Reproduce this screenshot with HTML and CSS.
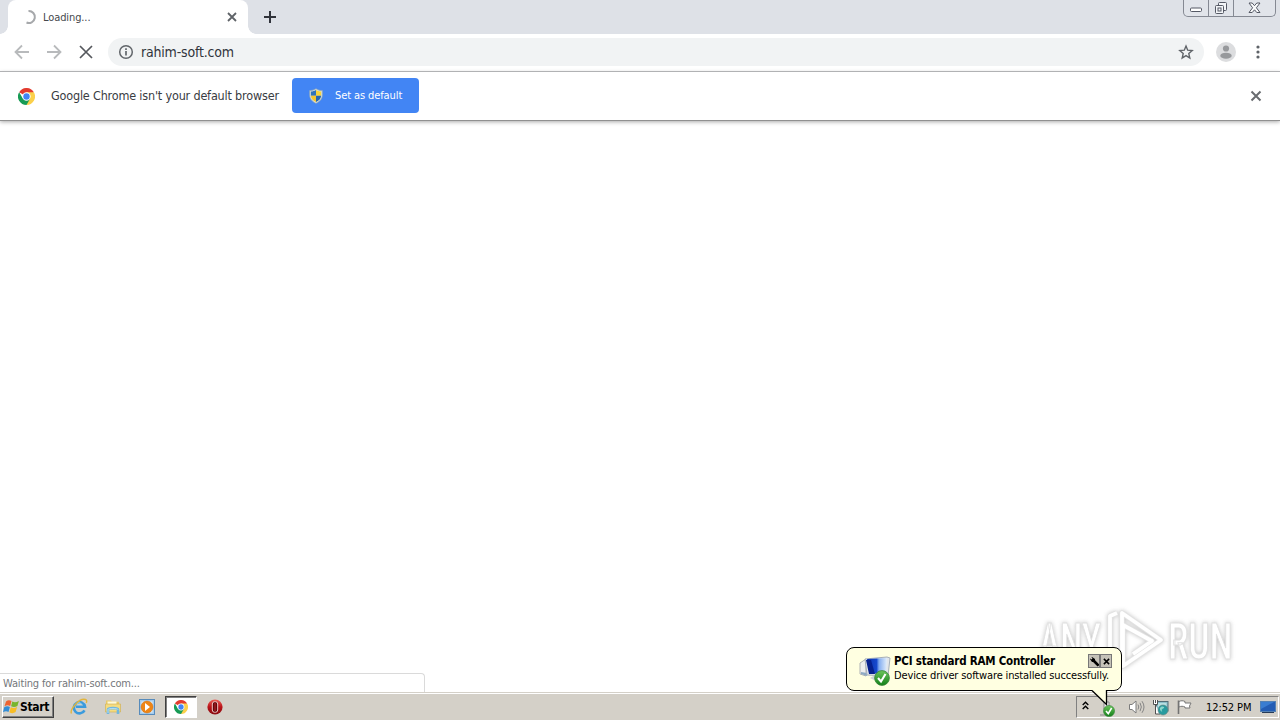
FILE: index.html
```html
<!DOCTYPE html>
<html lang="en">
<head>
<meta charset="utf-8">
<title>Loading...</title>
<link rel="stylesheet" href="styles.css">
</head>
<body>
<svg class="defs" width="0" height="0" aria-hidden="true">
  <defs>
    <linearGradient id="orb" x2="0" y2="1"><stop stop-color="#ee6058"/><stop offset=".5" stop-color="#b91319"/><stop offset="1" stop-color="#870a10"/></linearGradient>
    <linearGradient id="screen" x2="1" y2="0"><stop stop-color="#0b2fae"/><stop offset=".48" stop-color="#1649cd"/><stop offset=".6" stop-color="#83acf0"/><stop offset="1" stop-color="#e2eefb"/></linearGradient>
    <linearGradient id="green" x2="0" y2="1"><stop stop-color="#6cc55c"/><stop offset="1" stop-color="#138018"/></linearGradient>
    <symbol id="chrome" viewBox="0 0 18 18">
      <path fill="#e33b2e" d="M9 9 1.2 4.5a9 9 0 0 1 15.6 0Z"/>
      <path fill="#fbd04b" d="M9 9V4.5h7.8A9 9 0 0 1 9 18Z"/>
      <path fill="#179b55" d="M1.2 4.5 5.1 11.2 12.9 11.2 9 18A9 9 0 0 1 1.2 4.5Z"/>
      <circle cx="9" cy="9" r="4.4" fill="#fff"/><circle cx="9" cy="9" r="3.4" fill="#4285f4"/>
    </symbol>
    <symbol id="check" viewBox="0 0 16 16">
      <circle cx="8" cy="8" r="7.4" fill="url(#green)" stroke="#36853a" stroke-width=".8"/>
      <path d="m4 8 3 3.5L11.5 4" fill="none" stroke="#fff" stroke-width="2.1"/>
    </symbol>
  </defs>
</svg>
<div class="desktop">
  <header class="tabstrip">
    <div class="tab">
      <svg class="spinner" width="16" height="16" viewBox="0 0 16 16"><path d="M7.500 2A6 6 0 1 1 5.500 13.500" fill="none" stroke="#a6a8ab" stroke-width="2"/></svg>
      <span class="tab-title">Loading...</span>
      <svg width="10" height="10" viewBox="0 0 10 10"><path d="m1 1 8 8M9 1 1 9" stroke="#5f6368" stroke-width="1.8"/></svg>
    </div>
    <svg class="newtab" width="12" height="12" viewBox="0 0 12 12"><path d="M6 0v12M0 6h12" stroke="#30333b" stroke-width="2"/></svg>
    <div class="window-controls">
      <span class="wc wc-min"><svg width="14" height="6" viewBox="0 0 14 6"><rect x="1.5" y="1" width="11" height="3.5" rx="1" fill="#fff" stroke="#555965"/></svg></span>
      <span class="wc wc-max"><svg width="14" height="14" viewBox="0 0 14 14" fill="#f3f5f8" stroke="#555965"><rect x="4.5" y="1.5" width="8" height="8" rx="1"/><rect x="1.5" y="4.5" width="8" height="8" rx="1"/><rect x="4" y="7" width="3" height="3"/></svg></span>
      <span class="wc wc-close"><svg width="13" height="12" viewBox="0 0 13 12"><path d="M1 1h3.2l2.3 2.7L8.800 1H12L8.400 5.800 12 10.500H8.800L6.500 7.800l-2.300 2.700H1l3.600-4.700Z" fill="#fafbfc" stroke="#555965"/></svg></span>
    </div>
  </header>
  <div class="toolbar">
    <div class="nav">
      <svg width="16" height="16" viewBox="0 0 16 16" fill="none" stroke="#b8babc" stroke-width="1.8"><path d="M15 8H2M8 1.500 1.500 8 8 14.500"/></svg>
      <svg width="16" height="16" viewBox="0 0 16 16" fill="none" stroke="#b8babc" stroke-width="1.800"><path d="M1 8h13M8 1.500 14.500 8 8 14.500"/></svg>
      <svg width="16" height="16" viewBox="0 0 16 16" stroke="#55585d" stroke-width="1.700"><path d="m2 2 12 12M14 2 2 14"/></svg>
    </div>
    <div class="omnibox">
      <svg width="16" height="16" viewBox="0 0 16 16"><circle cx="8" cy="8" r="6.300" fill="none" stroke="#62666b" stroke-width="1.500"/><path d="M8 7v4.500M8 4.300v1.600" stroke="#62666b" stroke-width="1.700"/></svg>
      <span class="url">rahim-soft.com</span>
      <svg width="16" height="16" viewBox="0 0 16 16"><path d="m8 2 1.700 4.200 4.500.4-3.400 3 1 4.400L8 11.600 4.200 14l1-4.400-3.400-3 4.500-.4Z" fill="none" stroke="#5f6368" stroke-width="1.400"/></svg>
    </div>
    <svg class="avatar" width="20" height="20" viewBox="0 0 20 20"><circle cx="10" cy="10" r="10" fill="#dcdddf"/><circle cx="10" cy="6.500" r="3.100" fill="#97999c"/><ellipse cx="10" cy="13.700" rx="5.700" ry="3" fill="#97999c"/></svg>
    <svg class="kebab" width="4" height="16" viewBox="0 0 4 16" fill="#5f6368"><circle cx="2" cy="3" r="1.600"/><circle cx="2" cy="8" r="1.600"/><circle cx="2" cy="13" r="1.600"/></svg>
  </div>
  <div class="infobar">
    <svg class="info-logo" width="17" height="17"><use href="#chrome"/></svg>
    <span class="info-text">Google Chrome isn't your default browser</span>
    <div class="set-default">
      <svg width="14" height="16" viewBox="0 0 14 16"><path d="M7 .7c2 1.300 4 1.800 6.300 1.800v4.700c0 3.700-2.500 6.300-6.300 8.100C3.200 13.500.7 10.900.7 7.200V2.500C3 2.500 5 2 7 .7Z" fill="#d9dfd8" stroke="#8fa7b8" stroke-width=".7"/><path d="M7 2v5.700H1.900V3.600C3.900 3.400 5.300 3 7 2Z" fill="#2f73bb"/><path d="M7 2c1.700 1 3.100 1.400 5.100 1.600v4.100H7Z" fill="#f7d43b"/><path d="M1.900 7.700H7V14c-3-1.500-4.900-3.400-5.100-6.300Z" fill="#f4c62e"/><path d="M7 7.700h5.100C11.900 10.600 10 12.500 7 14Z" fill="#2866ad"/></svg>
      <span class="set-text">Set as default</span>
    </div>
    <svg class="info-close" width="12" height="12" viewBox="0 0 12 12"><path d="m1.500 1.500 9 9M10.500 1.500l-9 9" stroke="#696c70" stroke-width="2"/></svg>
  </div>
  <main class="page">
    <div class="status"><span>Waiting for rahim-soft.com...</span></div>
  </main>
  <footer class="taskbar">
    <div class="start">
      <svg width="17" height="16" viewBox="0 0 17 16"><path d="M3 2.500C5 .8 6.700 1 8.500 2L7.200 7C5.300 6 3.700 6 1.500 7.300Z" fill="#ed6432"/><path d="M9.300 2.500c2 1.100 4 1 6.600-.5L14.400 7c-2 1.300-4.200 1.500-6.300.3Z" fill="#78b52f"/><path d="M1.200 8.300C3.300 7 5 7.100 6.900 8L5.500 13C3.700 12 2.100 12 0 13.300Z" fill="#328dd6"/><path d="M7.800 8.300c2 1.200 4 1 6.300-.2l-1.500 5c-2 1.300-4.100 1.400-6.200.2Z" fill="#f8bd25"/></svg>
      <span>Start</span>
    </div>
    <div class="quick">
      <svg width="18" height="18" viewBox="0 0 18 18"><path d="M14.500 12.300A5.600 5.600 0 1 1 15 8.800H6" fill="none" stroke="#3b9bdd" stroke-width="2.600"/><path d="M6 6.500a3.500 3.500 0 0 1 6 0" fill="none" stroke="#a9def8" stroke-width="1"/><path d="M1.500 15.500C-.5 12 9-.3 15.500 1.500c1.500.5 1.400 2 .7 3.400" fill="none" stroke="#e2b53c" stroke-width="1.400"/></svg>
      <svg width="18" height="18" viewBox="0 0 18 18"><path d="M2 4V2.500h5l1 1.300h7V9H2Z" fill="#e8ca69"/><path d="M3.500 3.500h9V6h-9Z" fill="#fff9d8"/><path d="M1.500 6h15v8h-15Z" fill="#f5dc80" stroke="#cfac4e" stroke-width=".6"/><path d="M4 16v-4.500c0-2 10-2 10 0V16" fill="none" stroke="#71b7df" stroke-width="2.600"/><path d="M4 15v-3.500c0-1.400 10-1.400 10 0" fill="none" stroke="#c7e8f7" stroke-width=".8"/></svg>
      <svg width="18" height="18" viewBox="0 0 18 18"><rect x="1.500" y="1.500" width="15" height="15" fill="#a4ccee" stroke="#578bbb"/><path d="M3.500 3.500h11v11h-11Z" fill="#e5f0f7"/><circle cx="9" cy="9" r="6" fill="#ee8515" stroke="#cf6a0d" stroke-width=".5"/><path d="m7 5 5 4-5 4Z" fill="#fff"/></svg>
    </div>
    <div class="task-active"><svg width="14" height="14"><use href="#chrome"/></svg></div>
    <svg class="opera" width="16" height="16" viewBox="0 0 16 16"><circle cx="8" cy="8" r="7.600" fill="url(#orb)"/><rect x="5.300" y="2.700" width="5.400" height="10.600" rx="2.300" fill="#61070c" stroke="#f0c6c4" stroke-width="1"/><path d="M8 4v8" stroke="#a11a1e" stroke-width="1.500"/></svg>
    <div class="tray">
      <svg class="chevrons" width="7" height="9" viewBox="0 0 7 9"><path d="m.7 4 2.800-2.800L6.300 4M.7 8l2.800-2.800L6.300 8" fill="none" stroke="#000" stroke-width="1.400"/></svg>
      <svg class="device" width="16" height="16" viewBox="0 0 16 16"><path d="M5 8V1h5v6M1 14h6" fill="#eee" stroke="#888"/><use href="#check" x="4" y="4" width="12" height="12"/></svg>
      <svg class="sound" width="17" height="16" viewBox="0 0 17 16"><path d="M1.500 5.500H4l4-3.500v12l-4-3.500H1.500Z" fill="#fff" stroke="#7c7c7c"/><path d="M10 5.500q1.500 2.500 0 5M12 3.800q2.700 4.200 0 8.400M14 2.200q4 5.800 0 11.600" fill="none" stroke="#858585" stroke-width="1"/></svg>
      <svg class="network" width="17" height="17" viewBox="0 0 17 17"><rect x="4.500" y="2.500" width="11.500" height="9.500" fill="#8cbec9" stroke="#526c76"/><path d="M6 4h8.500v6.500H6Z" fill="#b9e0e2"/><path d="M1.500 1v4.500h4V1M3.500 1v3M3.500 5.500V15H8" fill="#fff" stroke="#515151"/><circle cx="11" cy="11" r="5" fill="#279b9f" stroke="#64837e" stroke-width=".6"/><path d="M8 9c2-3 5-1 4 0s-3 1-2 3-3-1-2-3Z" fill="#8cd5cb"/></svg>
      <svg class="flag" width="17" height="16" viewBox="0 0 17 16"><path d="M2.500 15V1.500" stroke="#727272" stroke-width="1.600"/><path d="M3 2.500c2-1 4-1 6 0v1.500h6l-1.500 3L14 9H9V8C7 7 5 7 3 8Z" fill="#fff" stroke="#777"/></svg>
      <span class="clock">12:52 PM</span>
      <svg class="show-desktop" width="16" height="14" viewBox="0 0 16 14"><rect x=".5" y="1.500" width="15" height="10" fill="#245db4" stroke="#5481b3"/><path d="M1 2h13L1 9Z" fill="#3a7dd1"/><path d="M2 12.500h12" stroke="#263b58"/></svg>
    </div>
  </footer>
  <div class="watermark" aria-label="ANY RUN">
    <span class="wm-any">ANY</span>
    <svg width="60" height="68" viewBox="0 0 60 68" fill="none" stroke-linejoin="round"><path d="M10 49H5V8l7-3M17 55V5l39 27-38 26V17l29 16-19 13" stroke="#dedede" stroke-width="5.500"/><path d="M10 49H5V8l7-3M17 55V5l39 27-38 26V17l29 16-19 13" stroke="#fff" stroke-width="3.800"/></svg>
    <span class="wm-run">RUN</span>
  </div>
  <aside class="balloon">
    <svg class="balloon-icon" width="33" height="32" viewBox="0 0 33 32"><path d="M2 9 8 5v17l-6-2Z" fill="#eee" stroke="#aeb2b4"/><path d="m3 18 6 1v3l-6-2Z" fill="#8faac3"/><path d="M7 5 29 3l3 1-2 18-21-1Z" fill="#e2e6eb" stroke="#a6afb9"/><path d="m9 5 20-1-1 15-16 1Z" fill="url(#screen)"/><path d="M8 6h5l4 14h-6Z" fill="#06208e"/><path d="m12 24 5-3h7v5h-8Z" fill="#cfd2d6"/><use href="#check" x="16" y="16" width="16" height="16"/></svg>
    <div class="balloon-body">
      <div class="balloon-head">
        <span class="balloon-title">PCI standard RAM Controller</span>
        <span class="balloon-buttons">
          <span class="bb"><svg width="11" height="11" viewBox="0 0 11 11"><path d="M1 3 3 1l3 2v2l4 4-1 1-4-4H3Z"/><path d="m4 4 5.500 5.500" stroke="#000" stroke-width="2.600"/><path d="m1 1 2 2" stroke="#d4d0c8" stroke-width="1.500"/></svg></span>
          <span class="bb"><svg width="7" height="7" viewBox="0 0 8 8"><path d="m1 1 6 6M7 1 1 7" stroke="#000" stroke-width="1.700"/></svg></span>
        </span>
      </div>
      <span class="balloon-text">Device driver software installed successfully.</span>
    </div>
    <svg class="balloon-tail" width="20" height="17" viewBox="0 0 20 17"><path d="M1 0v1.500L15.500 15.500V0Z" fill="#ffffe1"/><path d="m1 1.500 14.500 14V1" fill="none" stroke="#000" stroke-width="1.300"/></svg>
  </aside>
</div>
</body>
</html>
```

FILE: styles.css
```css
* { box-sizing: border-box; }
body { margin: 0; font-family: "DejaVu Sans Condensed", "DejaVu Sans", sans-serif; font-stretch: condensed; }
svg { display: block; flex: none; }
span { white-space: nowrap; }
.defs { position: absolute; }
.desktop { position: relative; width: 1280px; height: 720px; overflow: hidden; display: flex; flex-direction: column; background: #fff; }
.tabstrip { height: 34px; flex: none; background: #dee1e7; display: flex; padding-left: 8px; }
.tab { position: relative; width: 240px; background: #fff; border-radius: 8px 8px 0 0; display: flex; align-items: center; padding: 0 11px 0 13px; }
.tab::before, .tab::after { content: ""; position: absolute; bottom: 0; width: 8px; height: 8px; }
.tab::before { left: -8px; background: radial-gradient(circle at 0 0, transparent 7.5px, #fff 8px); }
.tab::after { right: -8px; background: radial-gradient(circle at 100% 0, transparent 7.5px, #fff 8px); }
.tab-title { flex: 1; margin-left: 6px; font-size: 11px; letter-spacing: -.1px; color: #45484d; }
.newtab { margin: 11px 0 0 16px; }
.window-controls { margin-left: auto; margin-right: 4px; width: 93px; height: 17px; border: 1px solid #858993; border-top: 0; border-radius: 0 0 5px 5px; display: flex; background: #e1e4ea; }
.wc { display: flex; justify-content: center; align-items: center; }
.wc-min { width: 24px; padding-top: 4px; }
.wc-max { width: 25px; border-left: 1px solid #858993; }
.wc-close { flex: 1; border-left: 1px solid #858993; }
.toolbar { height: 38px; flex: none; display: flex; align-items: center; padding: 0 20px 2px 14px; border-bottom: 1px solid #b3b4b7; }
.nav { display: flex; gap: 16px; width: 94px; }
.omnibox { width: 1096px; height: 28px; background: #f1f3f4; border-radius: 14px; display: flex; align-items: center; padding: 0 10px; }
.url { flex: 1; margin-left: 7px; font-size: 14px; letter-spacing: -.19px; color: #30333b; }
.avatar { margin-left: 12px; }
.kebab { margin-left: auto; }
.infobar { height: 49px; flex: none; display: flex; align-items: center; padding: 0 18px 1px 18px; border-bottom: 1px solid #909090; box-shadow: 0 1px 4px #aaa; }
.info-text { width: 241px; margin-left: 16px; font-size: 12.5px; letter-spacing: -.18px; color: #393c42; }
.info-logo, .info-close { margin-top: 1px; }
.set-default { width: 127px; height: 35px; border-radius: 4px; background: #4285f4; color: #fff; display: flex; align-items: center; padding-left: 17px; }
.set-text { margin-left: 12px; font-size: 11px; letter-spacing: -.1px; }
.info-close { margin-left: auto; }
.page { flex: 1; display: flex; align-items: flex-end; }
.status { width: 425px; height: 19px; border: 1px solid #dadada; border-width: 1px 1px 0 0; border-radius: 0 4px 0 0; font-size: 11px; letter-spacing: -.16px; line-height: 19px; padding-left: 3px; color: #74777b; }
.taskbar { height: 28px; flex: none; background: #d4d0c8; border-top: 1px solid #d4d0c8; box-shadow: inset 0 1px #fff; display: flex; align-items: center; padding: 1px 1px 0 2px; }
.start { width: 52px; height: 22px; border: 1px solid; border-color: #fff #404040 #404040 #fff; box-shadow: inset -1px -1px #808080; display: flex; align-items: center; padding-left: 0; font-size: 12px; letter-spacing: -.35px; font-weight: bold; }
.quick { display: flex; gap: 16px; margin-left: 16px; width: 95px; }
.task-active { width: 32px; height: 22px; background: #fff; border: 1px solid; border-color: #404040 #fff #fff #404040; box-shadow: inset 1px 1px #808080; display: flex; align-items: center; justify-content: center; }
.opera { margin-left: 10px; }
.tray { margin-left: auto; width: 203px; height: 22px; border: 1px solid; border-color: #808080 #fff #fff #808080; display: flex; align-items: center; }
.chevrons { margin: 0 0 3px 5px; }
.device { margin: 3px 0 0 10px; }
.sound { margin-left: 13px; }
.network { margin-left: 7px; }
.flag { margin-left: 7px; }
.clock { margin-left: 13px; font-size: 11px; letter-spacing: -.1px; width: 53px; }
.show-desktop { margin-left: 1px; }
.watermark { position: absolute; left: 1039px; top: 608px; height: 68px; display: flex; align-items: center; opacity: .85; font-family: Roboto, sans-serif; font-weight: 500; font-size: 50px; color: #fff; -webkit-text-stroke: 1px #dcdcdc; filter: drop-shadow(0 0 2px #bbb); }
.wm-any { width: 66px; transform: scaleX(.72); transform-origin: left; }
.wm-run { width: 64px; transform: scaleX(.75); transform-origin: left; margin-left: 3px; }
.balloon { position: absolute; left: 846px; top: 647px; width: 276px; height: 44px; border: 1px solid #000; border-radius: 8px; background: #ffffe1; display: flex; }
.balloon-icon { margin: 6px 0 0 11px; }
.balloon-body { margin-left: 3px; width: 218px; padding-top: 6px; }
.balloon-head { display: flex; height: 15px; }
.balloon-title { font-size: 11.5px; letter-spacing: -.22px; line-height: 14px; font-weight: bold; }
.balloon-buttons { display: flex; margin-left: auto; }
.bb { width: 12px; height: 14px; background: #c5c2b8; border: 1px solid #777; display: flex; align-items: center; justify-content: center; overflow: hidden; }
.balloon-text { display: block; font-size: 11px; letter-spacing: -.14px; line-height: 13px; }
.balloon-tail { position: absolute; left: 244px; top: 41px; }
```
